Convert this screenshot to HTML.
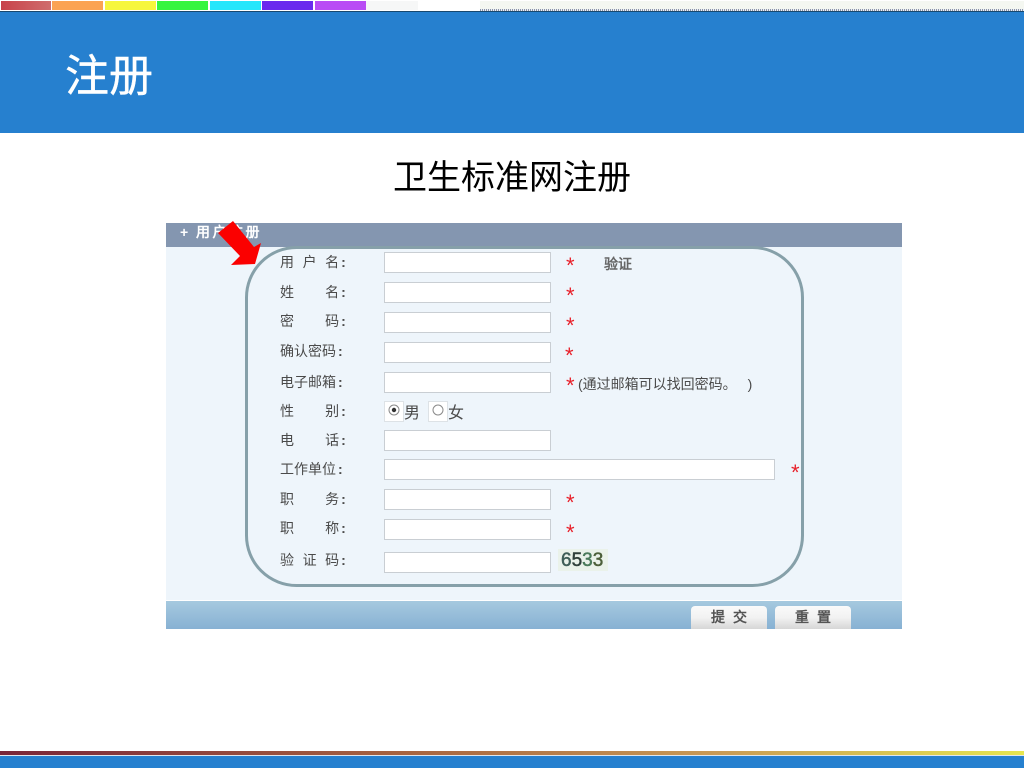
<!DOCTYPE html>
<html lang="zh">
<head>
<meta charset="utf-8">
<title>注册</title>
<style>
html,body{margin:0;padding:0;background:#fff;}
#p{position:relative;width:1024px;height:768px;overflow:hidden;background:#fff;font-family:"Liberation Sans","Noto Sans CJK SC",sans-serif;text-spacing-trim:space-all;}
#p div{position:absolute;}
.s{top:1px;height:9px;}
.l{left:280px;font-size:14px;line-height:18px;height:18px;color:#4a4a4a;white-space:pre;font-family:"Liberation Sans","WenQuanYi Zen Hei",sans-serif;}
.l b{font-weight:bold;margin-left:2px;}
.i{left:384px;width:165px;height:19px;background:#fff;border:1px solid #c9ced3;}
.r{color:#e8202a;font-size:22px;line-height:18px;height:18px;font-family:"Liberation Sans",sans-serif;}
.t{font-size:14px;line-height:18px;height:18px;color:#4a4a4a;white-space:pre;font-family:"Liberation Sans","WenQuanYi Zen Hei",sans-serif;}
.b{top:606px;width:76px;height:23px;border-radius:4px 4px 0 0;background:linear-gradient(#fafafa 0,#f2f2f2 50%,#d6d6d6 100%);text-align:center;font-size:14px;line-height:23px;font-weight:bold;color:#555;white-space:pre;font-family:"Liberation Sans","WenQuanYi Zen Hei",sans-serif;}
</style>
</head>
<body>
<div id="p">
  <div class="s" style="left:1px;width:50px;background:linear-gradient(90deg,#c8424a,#cf6d6d)"></div>
  <div class="s" style="left:52px;width:51px;background:#fba353"></div>
  <div class="s" style="left:105px;width:51px;background:#f6f63e"></div>
  <div class="s" style="left:157px;width:51px;background:#35f540"></div>
  <div class="s" style="left:210px;width:51px;background:#25e6fb"></div>
  <div class="s" style="left:262px;width:51px;background:#6a2aee"></div>
  <div class="s" style="left:315px;width:51px;background:#b94cf5"></div>
  <div class="s" style="left:366px;width:52px;background:#f6f7f7"></div>
  <div class="s" style="left:480px;width:544px;background:#f4f7f1"></div>
  <div style="left:480px;top:9px;width:544px;height:2px;background:repeating-linear-gradient(90deg,#8a94a8 0,#8a94a8 1px,#eef0f4 1px,#eef0f4 2px)"></div>
  <div style="left:0;top:11px;width:1024px;height:1px;background:#17486f"></div>
  <div style="left:0;top:12px;width:1024px;height:121px;background:#2680cf"></div>
  <div style="left:65px;top:47px;font-size:44px;line-height:60px;color:#fff;-webkit-text-stroke:0.4px #fff;font-family:'Liberation Sans','Noto Sans CJK SC',sans-serif;">注册</div>
  <div style="left:393px;top:155px;font-size:34px;line-height:46px;color:#000;white-space:nowrap;font-family:'Liberation Sans','Noto Sans CJK SC',sans-serif;">卫生标准网注册</div>

  <div style="left:166px;top:223px;width:736px;height:24px;background:#8496b0"></div>
  <div style="left:180px;top:223px;height:18px;font-size:14px;line-height:18px;font-weight:bold;color:#fff;white-space:pre;font-family:'Liberation Sans','WenQuanYi Zen Hei',sans-serif;">+  <span style="letter-spacing:2.5px">用户注册</span></div>
  <div style="left:166px;top:247px;width:736px;height:353px;background:#eef5fb"></div>
  <div style="left:166px;top:601px;width:736px;height:28px;background:linear-gradient(#a6c9df,#87b1d3)"></div>

  <svg style="position:absolute;left:0;top:0" width="1024" height="768" viewBox="0 0 1024 768">
    <rect x="246.5" y="247.5" width="556" height="338" rx="50" ry="50" fill="none" stroke="#86a0a9" stroke-width="3"/>
  </svg>

  <div class="l" style="top:253px;word-spacing:0.4px">用  户  名<b>:</b></div>
  <div class="l" style="top:283px">姓        名<b>:</b></div>
  <div class="l" style="top:312px">密        码<b>:</b></div>
  <div class="l" style="top:342px">确认密码<b>:</b></div>
  <div class="l" style="top:373px">电子邮箱<b>:</b></div>
  <div class="l" style="top:402px">性        别<b>:</b></div>
  <div class="l" style="top:431px">电        话<b>:</b></div>
  <div class="l" style="top:460px">工作单位<b>:</b></div>
  <div class="l" style="top:490px">职        务<b>:</b></div>
  <div class="l" style="top:519px">职        称<b>:</b></div>
  <div class="l" style="top:551px;word-spacing:0.4px">验  证  码<b>:</b></div>

  <div class="i" style="top:252px"></div>
  <div class="i" style="top:282px"></div>
  <div class="i" style="top:312px"></div>
  <div class="i" style="top:342px"></div>
  <div class="i" style="top:372px"></div>
  <div class="i" style="top:430px"></div>
  <div class="i" style="top:459px;width:389px"></div>
  <div class="i" style="top:489px"></div>
  <div class="i" style="top:519px"></div>
  <div class="i" style="top:552px"></div>

  <div class="r" style="left:566px;top:257px">*</div>
  <div class="r" style="left:566px;top:287px">*</div>
  <div class="r" style="left:566px;top:317px">*</div>
  <div class="r" style="left:565px;top:347px">*</div>
  <div class="r" style="left:566px;top:377px">*</div>
  <div class="r" style="left:791px;top:464px">*</div>
  <div class="r" style="left:566px;top:494px">*</div>
  <div class="r" style="left:566px;top:524px">*</div>

  <div style="left:604px;top:255px;font-size:14px;line-height:18px;font-weight:bold;color:#666;white-space:nowrap;font-family:'Liberation Sans','WenQuanYi Zen Hei',sans-serif;">验证</div>
  <div class="t" style="left:578px;top:375px">(通过邮箱可以找回密码。<span style="margin-left:11px">)</span></div>

  <div style="left:384px;top:401px;width:20px;height:21px;background:#fff;border:1px solid #dde2e6;box-sizing:border-box"></div>
  <div style="left:428px;top:401px;width:20px;height:21px;background:#fff;border:1px solid #dde2e6;box-sizing:border-box"></div>
  <svg style="position:absolute;left:0;top:0" width="1024" height="768" viewBox="0 0 1024 768">
    <circle cx="394" cy="410" r="5" fill="#fff" stroke="#8a8a8a" stroke-width="1"/>
    <circle cx="394" cy="410" r="2.2" fill="#333"/>
    <circle cx="438" cy="410" r="5" fill="#fff" stroke="#8a8a8a" stroke-width="1"/>
    <polygon points="218,233 233,221 254,247 261,243 255,264 231,265 240,256" fill="#fb0000"/>
  </svg>
  <div class="t" style="left:404px;top:405px;font-size:16px">男</div>
  <div class="t" style="left:448px;top:405px;font-size:16px">女</div>

  <div style="left:558px;top:549px;width:50px;height:22px;background:#eaf2ea"></div>
  <div style="left:561px;top:550px;font-size:19px;line-height:22px;color:#3f5e58;-webkit-text-stroke:0.5px currentColor;white-space:nowrap;font-family:'Liberation Sans',sans-serif;">6<span style="color:#2f3f3a">5</span><span style="color:#4a7a5a">3</span><span style="color:#4c5f3a">3</span></div>

  <div class="b" style="left:691px">提<span style="margin-left:8px">交</span></div>
  <div class="b" style="left:775px">重<span style="margin-left:8px">置</span></div>

  <div style="left:0;top:751px;width:1024px;height:4px;background:linear-gradient(90deg,#7a2538,#a8643f 40%,#c99a55 70%,#e6e650)"></div>
  <div style="left:0;top:755px;width:1024px;height:1px;background:#dfe6ee"></div>
  <div style="left:0;top:756px;width:1024px;height:12px;background:#2680cf"></div>
</div>
</body>
</html>
